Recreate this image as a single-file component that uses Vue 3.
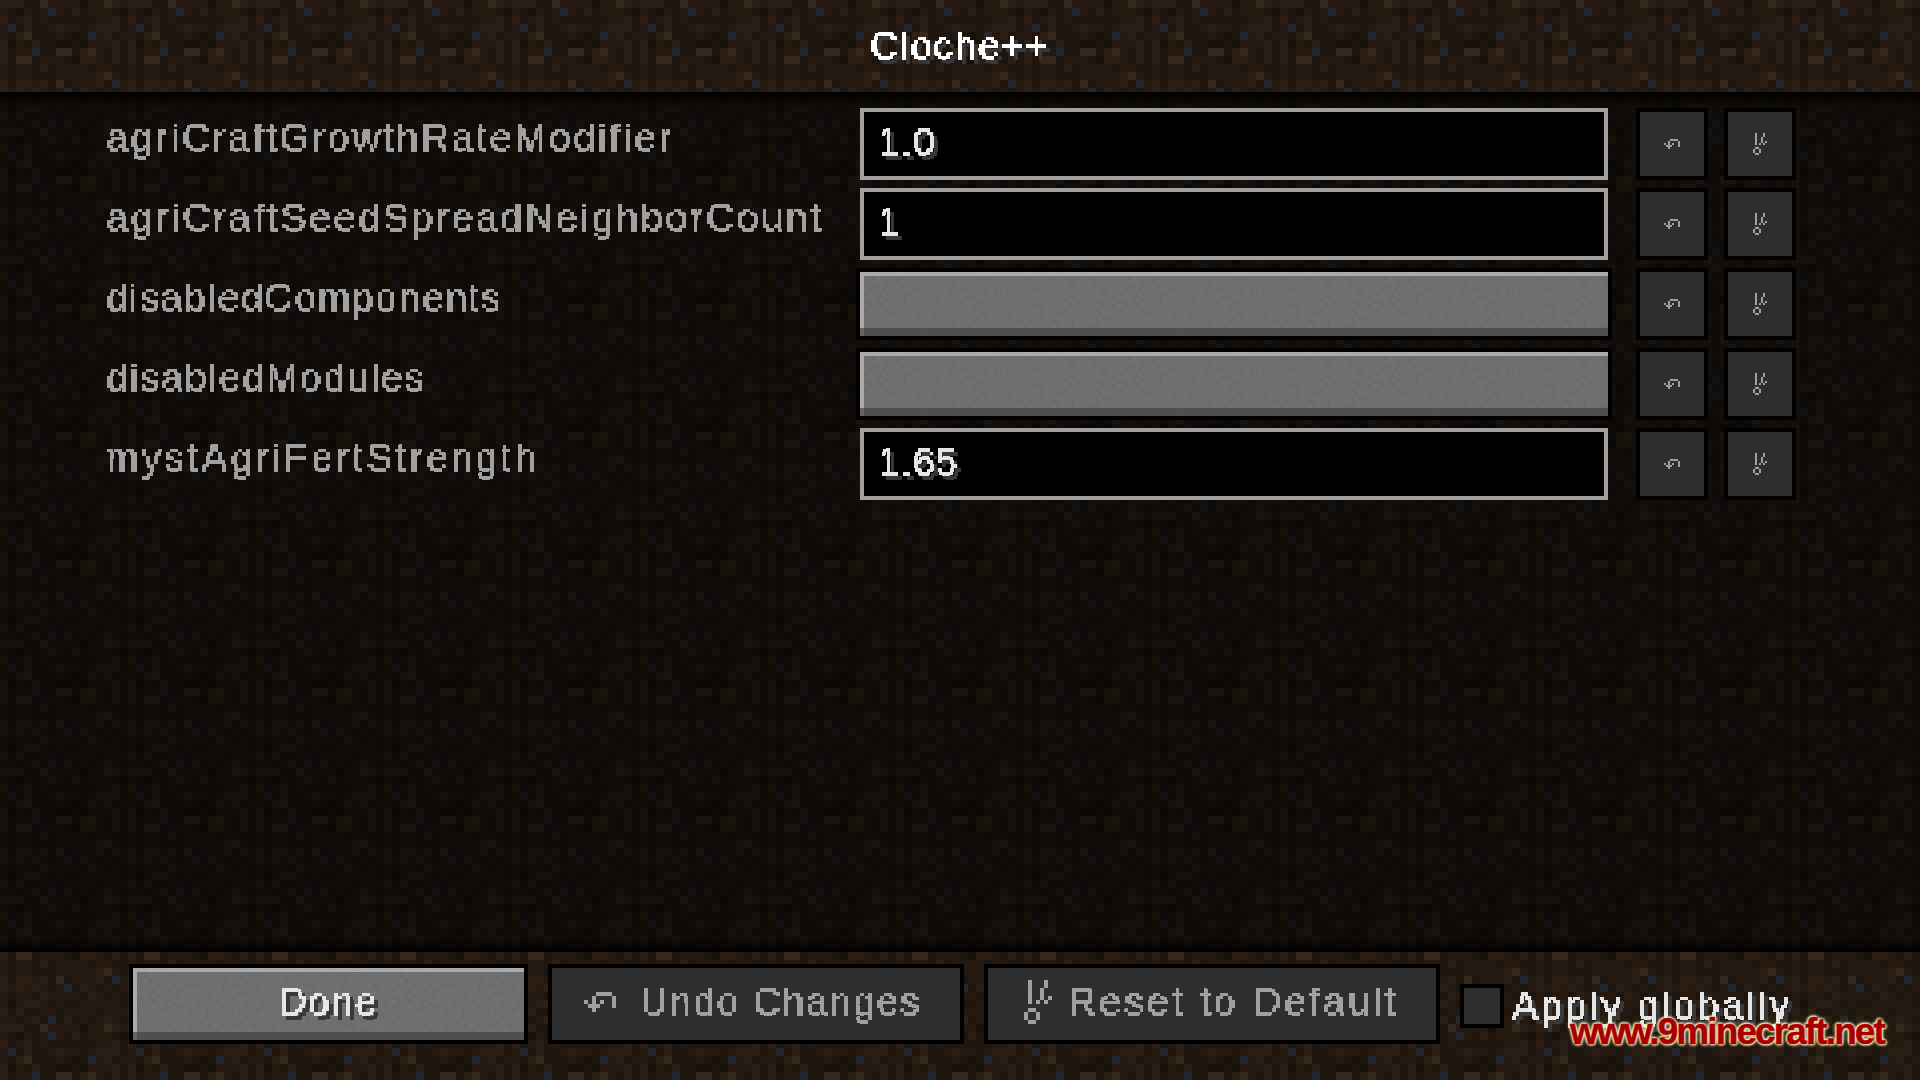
<template>
  <div class="screen">
    <!-- dirt background, one 16x16 tile repeated -->
    <svg class="dirt" width="1920" height="1080">
      <defs>
        <pattern id="dirt-tile" width="128" height="128" patternUnits="userSpaceOnUse">
          <rect
            v-for="t in texels"
            :key="t.id"
            :x="t.x"
            :y="t.y"
            width="8"
            height="8"
            :fill="t.fill"
            shape-rendering="crispEdges"
          />
        </pattern>
      </defs>
      <rect width="1920" height="1080" fill="url(#dirt-tile)" />
    </svg>

    <!-- turns smooth glyphs into 4px blocks like the game font -->
    <svg class="filters" width="0" height="0">
      <filter id="px" x="0" y="0" width="100%" height="100%" color-interpolation-filters="sRGB">
        <feFlood x="1" y="1" width="2" height="2" flood-color="#000" />
        <feComposite width="4" height="4" />
        <feTile result="grid" />
        <feComposite in="SourceGraphic" in2="grid" operator="in" />
        <feMorphology operator="dilate" radius="1" />
        <feComponentTransfer>
          <feFuncA type="discrete" tableValues="0 1 1" />
        </feComponentTransfer>
      </filter>
    </svg>

    <header class="top-bar">
      <span class="px-text bright title">Cloche++</span>
    </header>

    <main class="config-list">
      <div v-for="row in rows" :key="row.name" class="config-row">
        <span class="px-text flat row-label" :style="{ letterSpacing: row.spacing + 'px' }">{{ row.name }}</span>
        <div v-if="row.value" class="text-field">
          <span class="px-text bright value">{{ row.value }}</span>
        </div>
        <div v-else class="mc-btn active"></div>
        <div class="mc-btn square">
          <svg class="icon" width="16" height="10" viewBox="0 0 8 5" shape-rendering="crispEdges">
            <rect v-for="p in undoPixels" :key="p" :x="p[0]" :y="p[1]" :width="p[2]" height="1" />
          </svg>
        </div>
        <div class="mc-btn square">
          <svg class="icon" width="14" height="22" viewBox="0 0 7 11" shape-rendering="crispEdges">
            <rect v-for="p in resetPixels" :key="p" :x="p[0]" :y="p[1]" :width="p[2]" :height="p[3]" />
          </svg>
        </div>
      </div>
    </main>

    <footer class="bottom-bar">
      <div class="mc-btn active done-btn">
        <span class="px-text bright done-text">Done</span>
      </div>
      <div class="mc-btn undo-btn">
        <svg class="icon" width="32" height="20" viewBox="0 0 8 5" shape-rendering="crispEdges">
          <rect v-for="p in undoPixels" :key="p" :x="p[0]" :y="p[1]" :width="p[2]" height="1" />
        </svg>
        <span class="px-text flat undo-text">Undo Changes</span>
      </div>
      <div class="mc-btn reset-btn">
        <svg class="icon" width="28" height="44" viewBox="0 0 7 11" shape-rendering="crispEdges">
          <rect v-for="p in resetPixels" :key="p" :x="p[0]" :y="p[1]" :width="p[2]" :height="p[3]" />
        </svg>
        <span class="px-text flat reset-text">Reset to Default</span>
      </div>
      <div class="apply">
        <div class="mc-btn checkbox"></div>
        <span class="px-text bright apply-text">Apply globally</span>
      </div>
    </footer>

    <div class="watermark">www.9minecraft.net</div>
  </div>
</template>

<script setup>
// spacing evens out the width difference against the game font
const rows = [
  { name: 'agriCraftGrowthRateModifier', value: '1.0', spacing: 2.65 },
  { name: 'agriCraftSeedSpreadNeighborCount', value: '1', spacing: 2.78 },
  { name: 'disabledComponents', value: '', spacing: 1.66 },
  { name: 'disabledModules', value: '', spacing: 1.8 },
  { name: 'mystAgriFertStrength', value: '1.65', spacing: 3.27 }
]

// x, y, width
const undoPixels = [
  [3, 0, 4],
  [2, 1, 1], [7, 1, 1],
  [0, 2, 1], [2, 2, 1], [4, 2, 1], [7, 2, 1],
  [1, 3, 3], [7, 3, 1],
  [2, 4, 1]
]

// x, y, width, height
const resetPixels = [
  [1, 0, 1, 6],
  [5, 0, 1, 2],
  [4, 2, 1, 3],
  [3, 5, 1, 1],
  [6, 4, 1, 1],
  [5, 5, 1, 1],
  [1, 7, 2, 1],
  [0, 8, 1, 2],
  [3, 8, 1, 2],
  [1, 10, 2, 1]
]

const palette = {
  a: '#171009',
  b: '#1e150e',
  c: '#251a11',
  d: '#2c2016',
  e: '#35271a',
  s: '#24272c'
}

const tile = [
  'dddbbeccccacced',
  'cbacbcscbdbcccba',
  'dbcdbcbbbbbbccdb',
  'csbdbbcdccbcdddb',
  'cbdebbbcbabscdbc',
  'dacbdbbaabacccdb',
  'dbccsbbeebdecbdb',
  'dbeebcccbaddcbdb',
  'cbccbdbccccbccbb',
  'cbccbbbcccccdecb',
  'dbddcdbebcccdbsc',
  'dcdcdcbcsbdcbcbc',
  'cbccbdccccbdcbcb',
  'cacddcbcbbcccccb',
  'dbdbbccbccccbccc',
  'ccbcdbsbdbcbcdcb'
]

const texels = tile.flatMap((line, y) =>
  line.padEnd(16, 'c').split('').map((ch, x) => ({
    id: x + '-' + y,
    x: x * 8,
    y: y * 8,
    fill: palette[ch]
  }))
)
</script>

<style>
html,
body {
  margin: 0;
  background: #000;
}
</style>

<style scoped>
.screen {
  position: relative;
  width: 1920px;
  height: 1080px;
  overflow: hidden;
  display: flex;
  flex-direction: column;
  font-family: "Liberation Sans", Arial, sans-serif;
  font-size: 39px;
  line-height: 44px;
}

.dirt {
  position: absolute;
  left: 0;
  top: 0;
}

.filters {
  position: absolute;
}

.top-bar,
.config-list,
.bottom-bar {
  position: relative;
}

.px-text {
  display: inline-block;
  letter-spacing: 2.6px;
  white-space: nowrap;
  padding-right: 8px;
  padding-bottom: 8px;
  margin-right: -8px;
  margin-bottom: -8px;
}

.px-text.flat {
  color: #a0a0a0;
  filter: url(#px);
}

.px-text.bright {
  color: #e6e6e6;
  filter: url(#px) drop-shadow(4px 4px 0 #383838);
}

.top-bar {
  height: 92px;
  box-sizing: border-box;
  padding-top: 24px;
  display: flex;
  justify-content: center;
}

.px-text.title {
  color: #fff;
  letter-spacing: 1.7px;
}

.config-list {
  flex: 1;
  box-sizing: border-box;
  padding: 16px 0 0 106px;
  display: flex;
  flex-direction: column;
  gap: 8px;
  background:
    linear-gradient(#000, rgba(0, 0, 0, 0) 16px),
    linear-gradient(to top, #000, rgba(0, 0, 0, 0) 14px),
    rgba(0, 0, 0, 0.5);
}

.config-row {
  display: grid;
  grid-template-columns: 750px 756px 72px 72px;
  height: 72px;
}

.row-label {
  margin-top: 8px;
  justify-self: start;
}

.text-field {
  margin: 0 4px;
  box-sizing: border-box;
  border: 4px solid #a0a0a0;
  background: #000;
  padding: 8px 14px;
}

.value {
  letter-spacing: 1.2px;
}

.mc-btn {
  box-sizing: border-box;
  border: 4px solid #000;
  background-color: #2f2f2f;
  background-image: url("data:image/svg+xml,%3Csvg xmlns='http://www.w3.org/2000/svg' width='256' height='256'%3E%3Cfilter id='n'%3E%3CfeTurbulence type='fractalNoise' baseFrequency='0.25' numOctaves='2' seed='4'/%3E%3CfeColorMatrix values='0 0 0 0 0 0 0 0 0 0 0 0 0 0 0 1.2 0 0 0 -0.45'/%3E%3C/filter%3E%3Crect width='256' height='256' filter='url(%23n)' opacity='.12'/%3E%3C/svg%3E");
  display: flex;
  align-items: center;
  padding-bottom: 4px;
}

.mc-btn.active {
  background-color: #717171;
  box-shadow:
    inset 0 -8px 0 rgba(60, 60, 60, 0.62),
    inset 4px 4px 0 #aaa;
}

.mc-btn.square {
  justify-content: center;
  padding-bottom: 0;
}

.config-row .mc-btn.square {
  margin-left: 24px;
  margin-right: -24px;
}

.config-row .mc-btn.square:last-child {
  margin-left: 40px;
  margin-right: -40px;
}

.icon {
  fill: #a0a0a0;
  flex-shrink: 0;
}

.bottom-bar {
  height: 128px;
  box-sizing: border-box;
  padding: 12px 0 0 129px;
  display: flex;
  align-items: flex-start;
  gap: 20px;
}

.done-btn,
.undo-btn,
.reset-btn {
  height: 80px;
}

.done-btn {
  width: 399px;
  justify-content: center;
}

.done-text {
  letter-spacing: 1.7px;
}

.undo-btn {
  width: 416px;
  padding-left: 32px;
  gap: 24px;
}

.undo-text {
  letter-spacing: 1.75px;
}

.reset-btn {
  width: 456px;
  padding-left: 36px;
  gap: 16px;
}

.reset-text {
  letter-spacing: 3.2px;
}

.apply {
  display: flex;
  align-items: flex-start;
  gap: 8px;
  padding-top: 20px;
}

.apply-text {
  letter-spacing: 2.8px;
}

.checkbox {
  width: 44px;
  height: 44px;
  padding: 0;
}

.watermark {
  position: absolute;
  left: 1570px;
  top: 1012px;
  font-family: "Liberation Sans", Arial, sans-serif;
  font-weight: 700;
  font-size: 37px;
  line-height: 40px;
  letter-spacing: -1.9px;
  color: #a80000;
  white-space: nowrap;
  -webkit-text-stroke: 0.5px #a80000;
  text-shadow:
    0 0 3px #fff3c4,
    0 0 3px #fff3c4,
    0 0 4px #fff3c4,
    1px 1px 2px #e8c878,
    -1px -1px 2px #fff3c4;
}
</style>
